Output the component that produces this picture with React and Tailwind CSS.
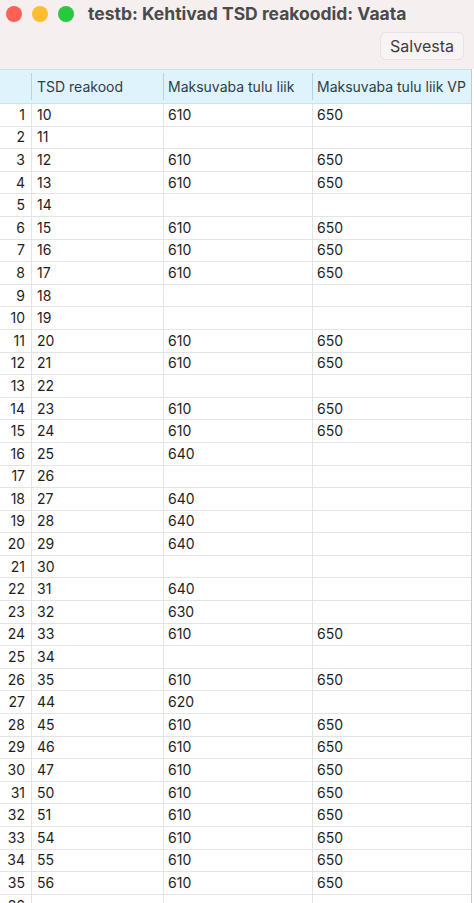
import React from "react";

const rows = [
  ["10", "610", "650"],
  ["11", "", ""],
  ["12", "610", "650"],
  ["13", "610", "650"],
  ["14", "", ""],
  ["15", "610", "650"],
  ["16", "610", "650"],
  ["17", "610", "650"],
  ["18", "", ""],
  ["19", "", ""],
  ["20", "610", "650"],
  ["21", "610", "650"],
  ["22", "", ""],
  ["23", "610", "650"],
  ["24", "610", "650"],
  ["25", "640", ""],
  ["26", "", ""],
  ["27", "640", ""],
  ["28", "640", ""],
  ["29", "640", ""],
  ["30", "", ""],
  ["31", "640", ""],
  ["32", "630", ""],
  ["33", "610", "650"],
  ["34", "", ""],
  ["35", "610", "650"],
  ["44", "620", ""],
  ["45", "610", "650"],
  ["46", "610", "650"],
  ["47", "610", "650"],
  ["50", "610", "650"],
  ["51", "610", "650"],
  ["54", "610", "650"],
  ["55", "610", "650"],
  ["56", "610", "650"],
  ["", "", ""],
];

const App = () => {
  return (
    <div
      className="w-[474px] h-[903px] overflow-hidden bg-white"
      style={{ fontFamily: "Inter, 'Noto Sans', sans-serif" }}
    >
      {/* Title bar + toolbar */}
      <div className="h-[69px] bg-[#f6eff0] flex flex-col">
        <div className="flex items-center h-[27px] pt-[1px]">
          <div className="flex gap-[10px] pl-[6px]">
            <span className="w-[16px] h-[16px] rounded-full bg-[#fe5f57]" />
            <span className="w-[16px] h-[16px] rounded-full bg-[#febc2e]" />
            <span className="w-[16px] h-[16px] rounded-full bg-[#28c840]" />
          </div>
          <span className="ml-[14px] text-[17.5px] font-bold text-[#4b4b4b]">
            testb: Kehtivad TSD reakoodid: Vaata
          </span>
        </div>
        <div className="flex justify-end pr-[10px] pt-[5px]">
          <button className="h-[28px] px-[9px] rounded-[6px] border border-[#e8e2e3] bg-[#f8f3f4] text-[16px] text-[#3e3e3e]">
            Salvesta
          </button>
        </div>
      </div>

      {/* Table */}
      <div className="w-[472px] border-r border-[#c8c8c8]">
        <div className="flex h-[35px] bg-[#def3fc] border-t border-b border-[#c9e3ee] text-[14px] text-[#2d3e48]">
          <div className="w-[31px] shrink-0" />
          <div className="w-[132px] shrink-0 border-l border-[#b9d3dd] my-[3px] flex items-center pl-[5px]">
            TSD reakood
          </div>
          <div className="w-[149px] shrink-0 border-l border-[#b9d3dd] my-[3px] flex items-center pl-[4px]">
            Maksuvaba tulu liik
          </div>
          <div className="flex-1 border-l border-[#b9d3dd] my-[3px] flex items-center pl-[4px] whitespace-nowrap overflow-hidden">
            Maksuvaba tulu liik VP
          </div>
        </div>
        {rows.map((r, i) => (
          <div
            key={i}
            className="flex h-[22.6px] border-b border-[#e4e4e4] text-[14px] text-[#1e1e1e] leading-none"
          >
            <div className="w-[31px] shrink-0 flex items-center justify-end pr-[6px]">
              {i + 1}
            </div>
            <div className="w-[132px] shrink-0 border-l border-[#e4e4e4] flex items-center pl-[5px]">
              {r[0]}
            </div>
            <div className="w-[149px] shrink-0 border-l border-[#e4e4e4] flex items-center pl-[4px]">
              {r[1]}
            </div>
            <div className="flex-1 border-l border-[#e4e4e4] flex items-center pl-[4px]">
              {r[2]}
            </div>
          </div>
        ))}
      </div>
    </div>
  );
};

export default App;
